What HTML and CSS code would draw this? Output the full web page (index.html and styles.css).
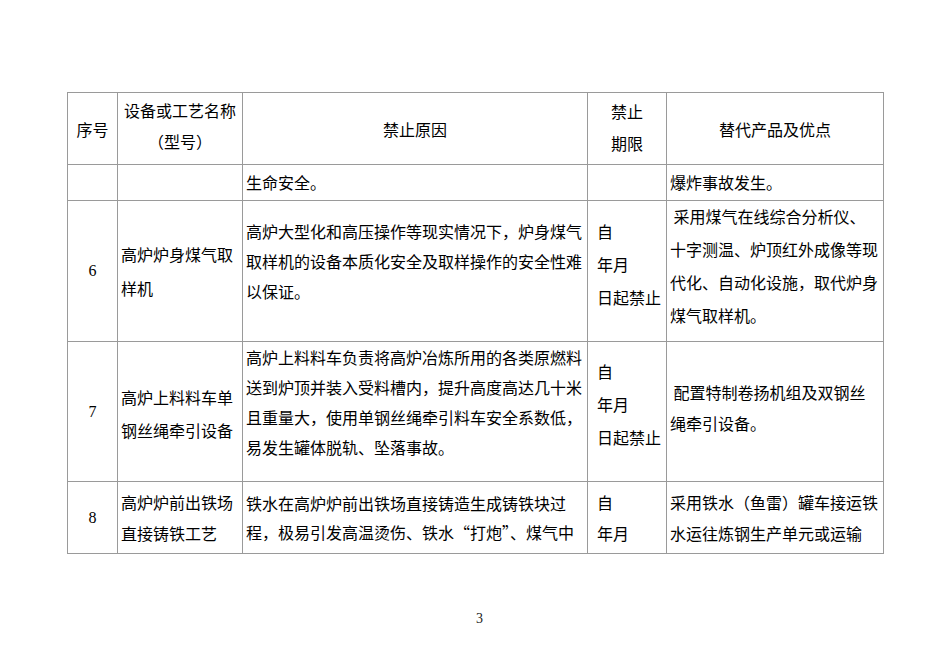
FILE: index.html
```html
<!DOCTYPE html>
<html lang="zh-CN">
<head>
<meta charset="utf-8">
<title>禁止目录</title>
<link rel="stylesheet" href="styles.css">
</head>
<body>
<div class="page">
  <div class="grid">
    <!-- header -->
    <div class="cell center"><div class="ln">序号</div></div>
    <div class="cell center head2"><div class="ln">设备或工艺名称</div><div class="ln">（型号）</div></div>
    <div class="cell center"><div class="ln">禁止原因</div></div>
    <div class="cell center head4"><div class="ln">禁止</div><div class="ln">期限</div></div>
    <div class="cell center"><div class="ln">替代产品及优点</div></div>

    <!-- continuation -->
    <div class="cell"></div>
    <div class="cell"></div>
    <div class="cell txt pb2"><div class="ln">生命安全。</div></div>
    <div class="cell"></div>
    <div class="cell txt pb2"><div class="ln">爆炸事故发生。</div></div>

    <!-- row 6 -->
    <div class="cell num">6</div>
    <div class="cell txt lh34"><div class="ln">高炉炉身煤气取</div><div class="ln">样机</div></div>
    <div class="cell txt lh30 pb21"><div class="ln">高炉大型化和高压操作等现实情况下，炉身煤气</div><div class="ln">取样机的设备本质化安全及取样操作的安全性难</div><div class="ln">以保证。</div></div>
    <div class="cell txt term lh33 pb14"><div class="ln">自</div><div class="ln">年月</div><div class="ln">日起禁止</div></div>
    <div class="cell txt lh33 pb10"><div class="ln">&nbsp;采用煤气在线综合分析仪、</div><div class="ln">十字测温、炉顶红外成像等现</div><div class="ln">代化、自动化设施，取代炉身</div><div class="ln">煤气取样机。</div></div>

    <!-- row 7 -->
    <div class="cell num">7</div>
    <div class="cell txt lh33 pt4"><div class="ln">高炉上料料车单</div><div class="ln">钢丝绳牵引设备</div></div>
    <div class="cell txt lh30 pb20"><div class="ln">高炉上料料车负责将高炉冶炼所用的各类原燃料</div><div class="ln">送到炉顶并装入受料槽内，提升高度高达几十米</div><div class="ln">且重量大，使用单钢丝绳牵引料车安全系数低，</div><div class="ln">易发生罐体脱轨、坠落事故。</div></div>
    <div class="cell txt term lh33 pb14"><div class="ln">自</div><div class="ln">年月</div><div class="ln">日起禁止</div></div>
    <div class="cell txt lh31 pb8"><div class="ln">&nbsp;配置特制卷扬机组及双钢丝</div><div class="ln">绳牵引设备。</div></div>

    <!-- row 8 -->
    <div class="cell num">8</div>
    <div class="cell txt lh31"><div class="ln">高炉炉前出铁场</div><div class="ln">直接铸铁工艺</div></div>
    <div class="cell txt lh29"><div class="ln">铁水在高炉炉前出铁场直接铸造生成铸铁块过</div><div class="ln">程，极易引发高温烫伤、铁水“打炮”、煤气中</div></div>
    <div class="cell txt term lh31"><div class="ln">自</div><div class="ln">年月</div></div>
    <div class="cell txt lh31"><div class="ln">采用铁水（鱼雷）罐车接运铁</div><div class="ln">水运往炼钢生产单元或运输</div></div>
  </div>
  <div class="pageno">3</div>
</div>
</body>
</html>
```

FILE: styles.css
```css
html, body {
  margin: 0;
  padding: 0;
  background: #ffffff;
}

.page {
  width: 950px;
  height: 672px;
  padding: 92px 0 0 67px;
  box-sizing: border-box;
  font-family: "Noto Sans CJK SC", "Noto Sans", sans-serif;
  font-size: 16px;
  color: #000000;
}

.grid {
  display: grid;
  width: 817px;
  box-sizing: border-box;
  grid-template-columns: 50px 125px 345px 79px 217px;
  grid-template-rows: 72px 36px 141px 140px 72px;
  border-top: 1px solid #9a9a9a;
  border-left: 1px solid #9a9a9a;
}

.cell {
  box-sizing: border-box;
  border-right: 1px solid #9a9a9a;
  border-bottom: 1px solid #9a9a9a;
  padding-left: 3px;
  display: flex;
  flex-direction: column;
  justify-content: center;
  white-space: nowrap;
  overflow: hidden;
}

.ln {
  line-height: 30px;
}

.center {
  align-items: center;
  padding-left: 0;
}

.head2 .ln { line-height: 31px; }
.head2 { padding-bottom: 5px; }
.head4 .ln { line-height: 32px; }
.head4 { padding-bottom: 4px; }

.num {
  align-items: center;
  padding-left: 0;
  font-family: "Liberation Serif", "Times New Roman", serif;
  font-size: 16px;
}

.term { padding-left: 9px; }

.lh29 .ln { line-height: 29px; }
.lh30 .ln { line-height: 30px; }
.lh31 .ln { line-height: 31px; }
.lh33 .ln { line-height: 33px; }
.lh34 .ln { line-height: 34px; }

.pb2 { padding-bottom: 2px; }
.pb8 { padding-bottom: 8px; }
.pb10 { padding-bottom: 10px; }
.pb14 { padding-bottom: 14px; }
.pb20 { padding-bottom: 20px; }
.pb21 { padding-bottom: 21px; }
.pt4 { padding-top: 4px; }

.pageno {
  width: 817px;
  margin-top: 57px;
  line-height: 16px;
  text-align: center;
  padding-left: 8px;
  box-sizing: border-box;
  font-family: "Liberation Serif", "Times New Roman", serif;
  font-size: 14px;
  color: #222222;
}
```
